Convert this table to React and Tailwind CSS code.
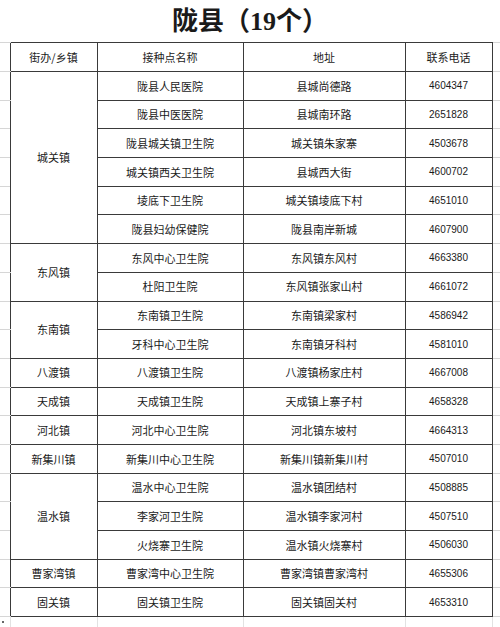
const groups = [
  {
    town: '城关镇',
    rows: [
      ['陇县人民医院', '县城尚德路', '4604347'],
      ['陇县中医医院', '县城南环路', '2651828'],
      ['陇县城关镇卫生院', '城关镇朱家寨', '4503678'],
      ['城关镇西关卫生院', '县城西大街', '4600702'],
      ['堎底下卫生院', '城关镇堎底下村', '4651010'],
      ['陇县妇幼保健院', '陇县南岸新城', '4607900'],
    ],
  },
  {
    town: '东风镇',
    rows: [
      ['东风中心卫生院', '东风镇东风村', '4663380'],
      ['杜阳卫生院', '东风镇张家山村', '4661072'],
    ],
  },
  {
    town: '东南镇',
    rows: [
      ['东南镇卫生院', '东南镇梁家村', '4586942'],
      ['牙科中心卫生院', '东南镇牙科村', '4581010'],
    ],
  },
  { town: '八渡镇', rows: [['八渡镇卫生院', '八渡镇杨家庄村', '4667008']] },
  { town: '天成镇', rows: [['天成镇卫生院', '天成镇上寨子村', '4658328']] },
  { town: '河北镇', rows: [['河北中心卫生院', '河北镇东坡村', '4664313']] },
  { town: '新集川镇', rows: [['新集川中心卫生院', '新集川镇新集川村', '4507010']] },
  {
    town: '温水镇',
    rows: [
      ['温水中心卫生院', '温水镇团结村', '4508885'],
      ['李家河卫生院', '温水镇李家河村', '4507510'],
      ['火烧寨卫生院', '温水镇火烧寨村', '4506030'],
    ],
  },
  { town: '曹家湾镇', rows: [['曹家湾中心卫生院', '曹家湾镇曹家湾村', '4655306']] },
  { town: '固关镇', rows: [['固关镇卫生院', '固关镇固关村', '4653310']] },
]

const cjk = "font-['SimSun','Noto_Sans_CJK_SC',sans-serif]"
const cell = `border border-[#3a3a3a] text-center align-middle text-[11px] text-[#1a1a1a] p-0 ${cjk}`
const num = `border border-[#3a3a3a] text-center align-middle text-[10px] text-[#1a1a1a] p-0 font-['Liberation_Sans',Arial,sans-serif]`
const edge = 'border-0 border-b border-solid border-b-[#d6d6d6] p-0'

export default function App() {
  return (
    <div className="w-[500px] h-[627px] bg-white overflow-hidden">
      {/* title */}
      <div className="h-[42px] flex items-center justify-center pt-[1px]">
        <h1 className={`text-[26px] font-semibold leading-none text-[#1a1a1a] font-['Liberation_Serif','Noto_Sans_CJK_SC',serif]`}>
          陇县（19个）
        </h1>
      </div>

      <table className="w-[500px] table-fixed border-collapse">
        <colgroup>
          <col className="w-[10px]" />
          <col className="w-[87px]" />
          <col className="w-[146px]" />
          <col className="w-[162px]" />
          <col className="w-[87px]" />
          <col className="w-[8px]" />
        </colgroup>
        <thead>
          <tr className="h-[29px]">
            <td className={`${edge} border-t border-t-[#d6d6d6]`} />
            <th className={`${cell} font-normal`}>街办/乡镇</th>
            <th className={`${cell} font-normal`}>接种点名称</th>
            <th className={`${cell} font-normal`}>地址</th>
            <th className={`${cell} font-normal`}>联系电话</th>
            <td className={`${edge} border-t border-t-[#d6d6d6]`} />
          </tr>
        </thead>
        <tbody>
          {groups.map(g =>
            g.rows.map((r, i) => (
              <tr key={g.town + i} className="h-[28.7px]">
                <td className={edge} />
                {i === 0 && (
                  <td rowSpan={g.rows.length} className={cell}>{g.town}</td>
                )}
                <td className={cell}>{r[0]}</td>
                <td className={cell}>{r[1]}</td>
                <td className={num}>{r[2]}</td>
                <td className={edge} />
              </tr>
            ))
          )}
          <tr className="h-[10px]">
            <td className="p-0 border-0 relative">
              <span className="absolute left-[2px] top-[4px] w-[2px] h-[2px] rounded-full bg-[#333]" />
            </td>
            <td className="p-0 border-0 border-l border-l-[#e2e2e2]" />
            <td className="p-0 border-0 border-l border-l-[#e2e2e2]" />
            <td className="p-0 border-0 border-l border-l-[#e2e2e2]" />
            <td className="p-0 border-0 border-l border-l-[#e2e2e2] border-r border-r-[#e2e2e2]" />
            <td className="p-0 border-0" />
          </tr>
        </tbody>
      </table>
    </div>
  )
}
